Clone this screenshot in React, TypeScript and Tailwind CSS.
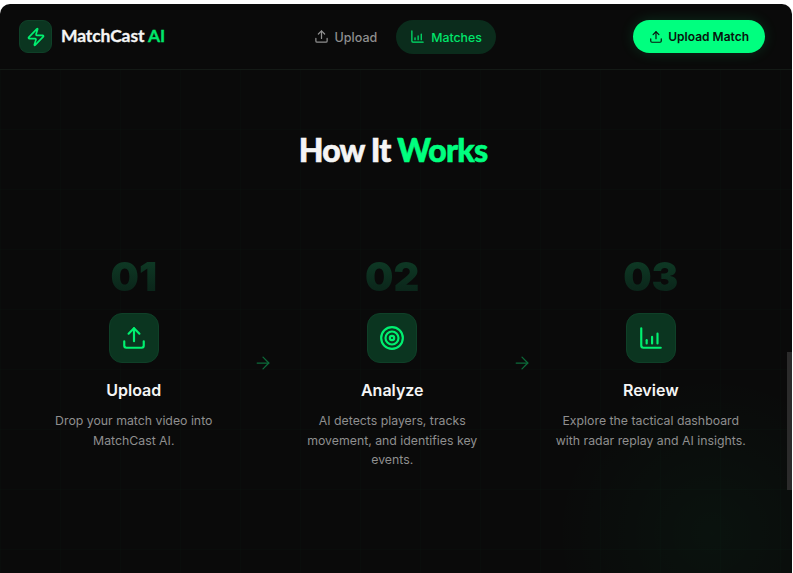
import { Upload, Zap, ArrowRight } from "lucide-react";

const STEPS = [
  { num: "01", title: "Upload", desc: "Drop your match video into MatchCast AI." },
  { num: "02", title: "Analyze", desc: "AI detects players, tracks movement, and identifies key events." },
  { num: "03", title: "Review", desc: "Explore the tactical dashboard with radar replay and AI insights." },
];

function TargetIcon() {
  return (
    <svg width="26" height="26" viewBox="0 0 24 24" fill="none" stroke="currentColor" strokeWidth="2">
      <circle cx="12" cy="12" r="10" />
      <circle cx="12" cy="12" r="6" />
      <circle cx="12" cy="12" r="2" />
    </svg>
  );
}

function ChartIcon({ size, width = 2 }: { size: number; width?: number }) {
  return (
    <svg
      width={size}
      height={size}
      viewBox="0 0 24 24"
      fill="none"
      stroke="currentColor"
      strokeWidth={width}
      strokeLinecap="round"
      strokeLinejoin="round"
    >
      <path d="M3 3v16a2 2 0 0 0 2 2h16" />
      <path d="M8 17v-3" />
      <path d="M13 17v-6" />
      <path d="M18 17V8" />
    </svg>
  );
}

function StepIcon({ index }: { index: number }) {
  if (index === 0) return <Upload size={26} strokeWidth={2} />;
  if (index === 1) return <TargetIcon />;
  return <ChartIcon size={26} />;
}

export default function App() {
  return (
    <div className="h-[573px] w-[793px] overflow-hidden bg-white pt-[4px] font-['Inter',sans-serif]">
      <div className="relative h-[569px] w-[792px] overflow-hidden rounded-t-[10px] bg-[#0a0a0a]">
        {/* faint grid + corner glow */}
        <div className="pointer-events-none absolute inset-0 top-[65px] bg-[linear-gradient(rgba(0,255,127,0.012)_1px,transparent_1px),linear-gradient(90deg,rgba(0,255,127,0.012)_1px,transparent_1px)] bg-[size:60px_60px]" />
        <div className="pointer-events-none absolute bottom-[-120px] right-[-80px] h-[320px] w-[320px] rounded-full bg-[radial-gradient(circle,rgba(0,255,127,0.035),transparent_70%)]" />

        {/* header */}
        <header className="relative flex h-[66px] items-center justify-between border-b border-[#141a16] pl-[19px] pr-[27px]">
          <div className="flex items-center gap-[9px]">
            <div className="flex h-[33px] w-[33px] items-center justify-center rounded-[9px] border border-[#0f4028] bg-[#0b3520] text-[#00f070]">
              <Zap size={20} strokeWidth={2} />
            </div>
            <span className="font-['Lato',sans-serif] text-[17.5px] font-bold tracking-[-0.1px] text-[#f5f5f5] [-webkit-text-stroke:0.3px]">
              MatchCast <span className="text-[#00e56b]">AI</span>
            </span>
          </div>

          <nav className="flex items-center gap-[2px] pr-[6px]">
            <div className="flex h-[34px] items-center gap-[6px] px-[17px] text-[12.5px] font-medium leading-[15px] text-[#8f8f8f]">
              <Upload size={15} strokeWidth={2} />
              <span className="pt-[1px]">Upload</span>
            </div>
            <div className="flex h-[34px] items-center gap-[6px] rounded-full bg-[#0b2c1c] px-[14px] text-[12.3px] font-medium leading-[15px] text-[#00e56b]">
              <ChartIcon size={15} />
              <span className="pt-[1px]">Matches</span>
            </div>
          </nav>

          <div className="flex h-[33px] items-center gap-[5px] rounded-full bg-[#00ff7f] px-[16px] text-[12px] font-semibold text-[#08130d] shadow-[0_0_14px_rgba(0,255,127,0.15)]">
            <Upload size={14} strokeWidth={2} />
            Upload Match
          </div>
        </header>

        {/* how it works */}
        <main className="relative w-[786px] pt-[60px]">
          <h2 className="text-center font-['Lato',sans-serif] text-[32px] font-black leading-[40px] tracking-[-0.8px] text-[#f5f5f5] [-webkit-text-stroke:0.6px]">
            How It <span className="text-[#00ff7f]">Works</span>
          </h2>

          <div className="mt-[84px] flex gap-[14px] pl-[28.5px]">
            {STEPS.map((step, i) => (
              <div key={step.num} className="contents">
                <div className="flex w-[210.5px] shrink-0 flex-col items-center text-center">
                  <div className="bg-[linear-gradient(#0f3d27,#0a2017)] bg-clip-text text-[40px] font-black leading-[46px] text-transparent">
                    {step.num}
                  </div>
                  <div className="mt-[13px] flex h-[50px] w-[50px] items-center justify-center rounded-[13px] border border-[#0f4028] bg-[#0b3520] text-[#00f070]">
                    <StepIcon index={i} />
                  </div>
                  <h3 className="mt-[15px] text-[16px] font-semibold leading-[24px] text-[#f5f5f5]">{step.title}</h3>
                  <p className="mt-[9px] px-2 text-[12.3px] leading-[19.5px] text-[#8f8f8f]">{step.desc}</p>
                </div>
                {i < 2 && (
                  <div className="mt-[99px] shrink-0 text-[#0d6b3a]">
                    <ArrowRight size={20} strokeWidth={1.5} />
                  </div>
                )}
              </div>
            ))}
          </div>
        </main>

        {/* scrollbar thumb */}
        <div className="absolute right-0 top-[348px] h-[138px] w-[5px] bg-[#2b2b2b]" />
      </div>
    </div>
  );
}
